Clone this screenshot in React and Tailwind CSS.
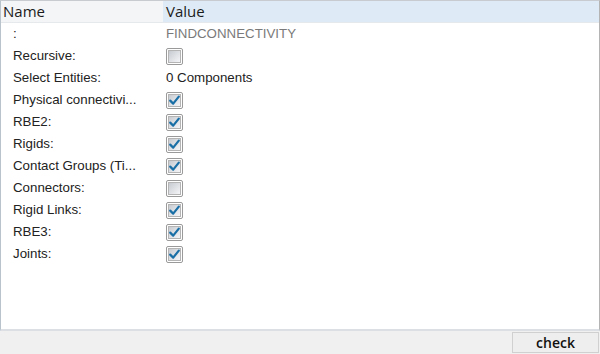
import React from "react";

const rows = [
  { name: ":", value: "FINDCONNECTIVITY", type: "text", muted: true },
  { name: "Recursive:", type: "check", checked: false },
  { name: "Select Entities:", value: "0 Components", type: "text" },
  { name: "Physical connectivi...", type: "check", checked: true },
  { name: "RBE2:", type: "check", checked: true },
  { name: "Rigids:", type: "check", checked: true },
  { name: "Contact Groups (Ti...", type: "check", checked: true },
  { name: "Connectors:", type: "check", checked: false },
  { name: "Rigid Links:", type: "check", checked: true },
  { name: "RBE3:", type: "check", checked: true },
  { name: "Joints:", type: "check", checked: true },
];

const CheckBox = ({ checked }) => (
  <svg width="17" height="17" viewBox="0 0 17 17">
    <defs>
      <linearGradient id="cbg" x1="0" y1="0" x2="1" y2="1">
        <stop offset="0" stopColor="#c5c9cf" />
        <stop offset="1" stopColor="#f6f7f9" />
      </linearGradient>
    </defs>
    <rect x="0.5" y="0.5" width="16" height="16" rx="1.5" fill="#ffffff" stroke="#9a9a9a" />
    <rect x="2.5" y="2.5" width="12" height="12" fill="url(#cbg)" stroke="#b4b4b4" />
    {checked && (
      <path d="M4.2 8.6 L7.2 11.6 L12.8 4.6" fill="none" stroke="#1a6fa6" strokeWidth="2.2" strokeLinecap="round" strokeLinejoin="round" />
    )}
  </svg>
);

const App = () => {
  return (
    <div className="w-[600px] h-[354px] bg-[#f0f0f0] flex flex-col overflow-hidden" style={{ fontFamily: '"Liberation Sans", Arial, sans-serif' }}>
      <div className="flex-1 flex flex-col bg-white border-t border-l border-r border-t-[#c8ccd0] border-l-[#b9c3cc] border-r-[#b4b4b4] border-b-2 border-b-[#dce0e4]">
        <div className="flex h-[22px] border-b border-[#e6e9ec]" style={{ fontFamily: '"Open Sans", "Noto Sans", sans-serif' }}>
          <div className="w-[162px] bg-[#f4f5f6] pl-[2px] text-[15px] leading-[21px] text-[#1b1b1b]">Name</div>
          <div className="flex-1 bg-[#deebf6] pl-[3px] text-[15px] leading-[21px] text-[#1b1b1b]">Value</div>
        </div>
        <div className="flex flex-col">
          {rows.map((row, index) => (
            <div key={index} className="flex h-[22px] items-center text-[13.3px] text-[#222]">
              <div className="w-[162px] pl-[12px] truncate">{row.name}</div>
              <div className="flex-1 pl-[3px] flex items-center">
                {row.type === "check" ? (
                  <CheckBox checked={row.checked} />
                ) : (
                  <span className={row.muted ? "text-[#7a7a7a]" : "text-[#222]"}>{row.value}</span>
                )}
              </div>
            </div>
          ))}
        </div>
      </div>
      <div className="h-[23px] flex justify-end items-start pt-[1px]">
        <button className="w-[87px] h-[21px] mr-[1px] bg-[#eeeeee] border border-[#d0d0d0] text-[14px] text-[#111] font-semibold leading-[19px]" style={{ fontFamily: '"Open Sans", "Noto Sans", sans-serif' }}>
          check
        </button>
      </div>
    </div>
  );
};

export default App;
